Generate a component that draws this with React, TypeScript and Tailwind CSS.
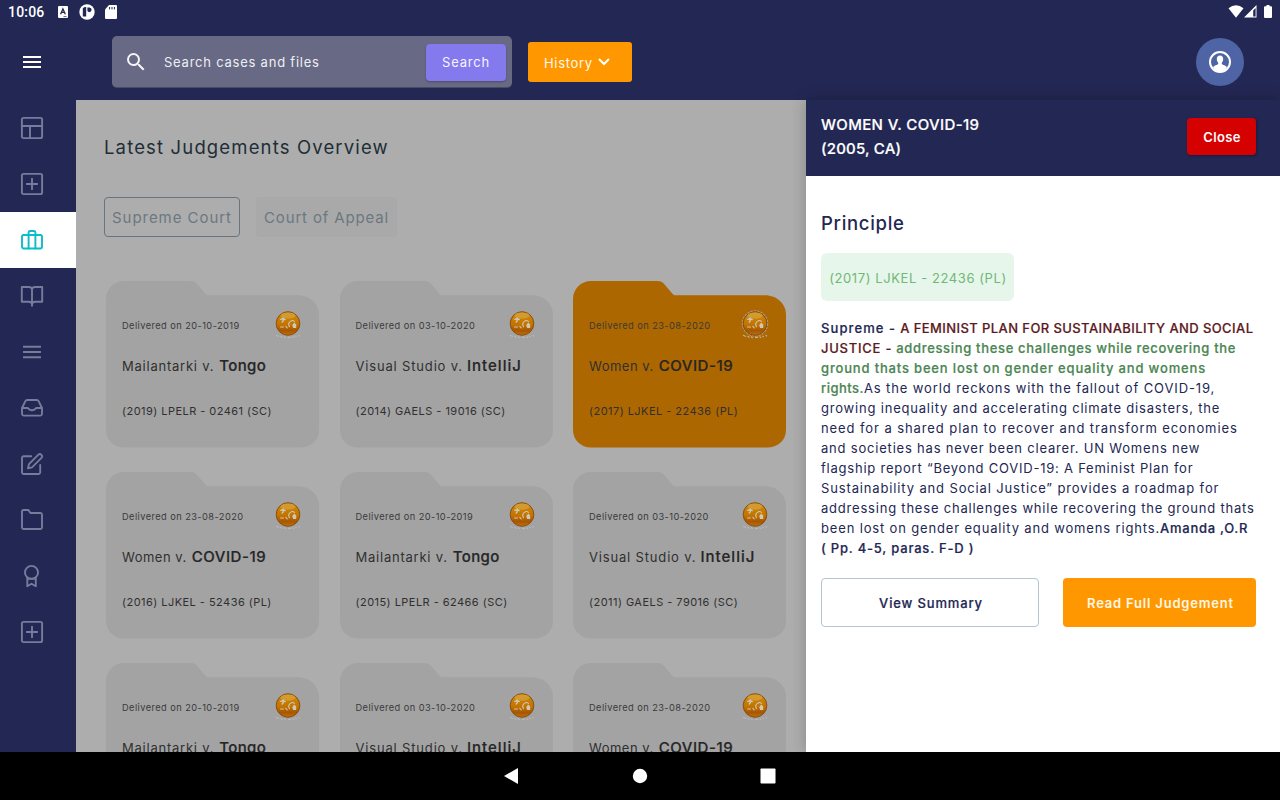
import type { ReactNode } from 'react';

function Glyph({ children, className = 'text-[#777b9c]' }: { children: ReactNode; className?: string }) {
  return (
    <svg
      viewBox="0 0 24 24"
      className={`size-6 ${className}`}
      fill="none"
      stroke="currentColor"
      strokeWidth="1.9"
      strokeLinecap="round"
      strokeLinejoin="round"
    >
      {children}
    </svg>
  );
}

const layoutGlyph = (
  <>
    <rect x="1.9" y="1.9" width="20.2" height="20.2" rx="1.6" />
    <path d="M2 10H22M10 10V22" />
  </>
);
const plusGlyph = (
  <>
    <rect x="1.9" y="1.9" width="20.2" height="20.2" rx="1.6" />
    <path d="M12 6.8V17.2M6.8 12H17.2" />
  </>
);
const briefcaseGlyph = (
  <>
    <rect x="2" y="7" width="20" height="13.5" rx="1.7" />
    <path d="M8.6 20.5V4.4A1.6 1.6 0 0 1 10.1 3H13.9A1.6 1.6 0 0 1 15.4 4.4V20.5" />
  </>
);
const bookGlyph = (
  <path d="M12 21.8V5.6C12 4 10.7 3 9 3H1.8V17.800H8.8C10.8 17.800 12 19 12 20.4C12 19 13.2 17.800 15.2 17.800H22.2V3H15C13.3 3 12 4 12 5.6" />
);
const menuGlyph = <path d="M4 6.8H20M4 12H20M4 17.2H20" strokeLinecap="square" />;
const inboxGlyph = (
  <path d="M2 12H7.6C8.6 12 8.6 14.2 12 14.2C15.4 14.2 15.4 12 16.4 12H22M2 12V18.2A1.7 1.7 0 0 0 3.6 19.6H20.4A1.7 1.7 0 0 0 22 18.2V12L18.6 5.1A2 2 0 0 0 16.8 4H7.2A2 2 0 0 0 5.4 5.1Z" />
);
const editGlyph = (
  <>
    <path d="M11.2 4.2H3.5A1.7 1.7 0 0 0 2 5.8V20.5A1.7 1.7 0 0 0 3.5 22H18.6A1.7 1.7 0 0 0 20.2 20.5V13" />
    <path d="M18.4 2.7A2.2 2.2 0 0 1 21.5 5.8L12 15.3L8 16.3L9 12.1Z" />
  </>
);
const folderGlyph = (
  <path d="M2 3.4A1.6 1.6 0 0 1 3.5 2H8.4L10.4 5H20.5A1.6 1.6 0 0 1 22 6.6V19.5A1.6 1.6 0 0 1 20.5 21H3.5A1.6 1.6 0 0 1 2 19.5Z" />
);
const awardGlyph = (
  <>
    <circle cx="11.5" cy="8.4" r="6.5" />
    <path d="M7.3 14V22.3L11.5 19.8L15.8 22.3V14M7.4 17.4V14.600H15.800V17.4" />
  </>
);

const nav = [
  { glyph: layoutGlyph, active: false },
  { glyph: plusGlyph, active: false },
  { glyph: briefcaseGlyph, active: true },
  { glyph: bookGlyph, active: false },
  { glyph: menuGlyph, active: false },
  { glyph: inboxGlyph, active: false },
  { glyph: editGlyph, active: false },
  { glyph: folderGlyph, active: false },
  { glyph: awardGlyph, active: false },
  { glyph: plusGlyph, active: false },
];

const plaintiffs = {
  mailantarki: <span className="tracking-[0.77px]">Mailantarki v.</span>,
  studio: <span className="tracking-[0.83px]">Visual Studio v.</span>,
  women: <span className="tracking-[0.5px]">Women v.</span>,
};
const defendants = {
  tongo: <span className="tracking-[0.36px]">Tongo</span>,
  intellij: <span className="-ml-px tracking-[1.02px]">IntelliJ</span>,
  covid: <span className="tracking-[0.55px]">COVID-19</span>,
};

const cases = [
  { date: '20-10-2019', p: plaintiffs.mailantarki, d: defendants.tongo, cite: '(2019) LPELR - 02461 (SC)' },
  { date: '03-10-2020', p: plaintiffs.studio, d: defendants.intellij, cite: '(2014) GAELS - 19016 (SC)' },
  { date: '23-08-2020', p: plaintiffs.women, d: defendants.covid, cite: '(2017) LJKEL - 22436 (PL)', selected: true },
  { date: '23-08-2020', p: plaintiffs.women, d: defendants.covid, cite: '(2016) LJKEL - 52436 (PL)' },
  { date: '20-10-2019', p: plaintiffs.mailantarki, d: defendants.tongo, cite: '(2015) LPELR - 62466 (SC)' },
  { date: '03-10-2020', p: plaintiffs.studio, d: defendants.intellij, cite: '(2011) GAELS - 79016 (SC)' },
  { date: '20-10-2019', p: plaintiffs.mailantarki, d: defendants.tongo, cite: '(2019) LPELR - 02461 (SC)' },
  { date: '03-10-2020', p: plaintiffs.studio, d: defendants.intellij, cite: '(2014) GAELS - 19016 (SC)' },
  { date: '23-08-2020', p: plaintiffs.women, d: defendants.covid, cite: '(2017) LJKEL - 22436 (PL)' },
];

function Emblem({ halo }: { halo?: boolean }) {
  return (
    <svg viewBox="0 0 30 32" className="-mb-0.5 h-8 w-[30px]">
      <defs>
        <linearGradient id="emblemFill" x1="0" y1="0" x2="0" y2="1">
          <stop offset="0" stopColor="#c98a14" />
          <stop offset="0.25" stopColor="#c98108" />
          <stop offset="0.55" stopColor="#c27400" />
          <stop offset="0.8" stopColor="#a95600" />
          <stop offset="1" stopColor="#b87310" />
        </linearGradient>
      </defs>
      {halo && (
        <circle cx="15" cy="14.5" r="12.6" fill="none" stroke="#a99f90" strokeWidth="1.2" strokeDasharray="2.4 1" />
      )}
      <circle cx="15" cy="14.5" r="11.8" fill="url(#emblemFill)" stroke="#8c4d0c" strokeWidth="1" />
      <ellipse cx="15" cy="6.6" rx="7.5" ry="3.2" fill="#e0b556" opacity="0.45" />
      <g fill="none" stroke="#cfc8b6" strokeLinecap="round">
        <path d="M7.800 10.400L10 9.6L12.2 10.6M10.200 9V11.8L9.200 13" strokeWidth="1.4" />
        <path d="M7.6 18H10.4M12.800 17.4L14.2 18.8M16.6 13L15.6 15L16.4 17.8M17.600 12.400C19 11 20.800 11.4 21.4 12.600" strokeWidth="1.1" />
      </g>
      <path d="M19.2 16.200L21.2 13.6L23.2 15.6V19H20.2Z" fill="#cfc8b6" />
      <path
        d="M3 26.300L6 27.6M7.4 27L9.5 28.6M11 27.4L12.6 29M15 28.4H18M19.5 27.5L21 28.8M22.4 26.8L23.6 28.2M25.6 26.2L27 27.2"
        stroke={halo ? '#c4b294' : '#b9b9b9'}
        strokeWidth="1.1"
      />
    </svg>
  );
}

function CaseCard({ item }: { item: (typeof cases)[number] }) {
  return (
    <article className="relative h-[167px] w-[213px]">
      <svg
        viewBox="0 0 213 167"
        className={`absolute inset-0 h-full w-full ${item.selected ? 'text-[#ad6700]' : 'text-[#a3a3a3]'}`}
      >
        <path
          fill="currentColor"
          d="M18 0H84C88 0 90 1.5 92 4L99 12.2C100.4 13.8 101 14.2 103 14.2H192C204 14.2 213 23 213 33V149C213 159.500 204.500 166.500 194 166.500H18C8 166.500 0 159 0 149V18C0 8 8 0 18 0Z"
        />
      </svg>
      <div className="relative flex h-full flex-col pl-4 text-[#303030]">
        <div className="flex h-[58px] items-end justify-between pr-4">
          <p className="whitespace-nowrap pb-[7px] text-[9.25px] leading-[13px] tracking-[0.43px] text-[#3a3a3a]">
            Delivered on {item.date}
          </p>
          <Emblem halo={item.selected} />
        </div>
        <h3 className="mt-[15px] flex h-6 items-baseline gap-[5px] whitespace-nowrap text-[13px] leading-6">
          {item.p}
          <span className="text-[15px] font-medium text-[#262626] [-webkit-text-stroke:0.2px]">{item.d}</span>
        </h3>
        <p className="mt-6 whitespace-nowrap text-[11px] leading-[18px] tracking-[0.46px]">{item.cite}</p>
      </div>
    </article>
  );
}

function StatusBar() {
  return (
    <div className="flex h-6 items-center justify-between pl-2 pr-2 text-white">
      <div className="flex items-center">
        <span className="w-[50px] font-['Roboto'] text-[14px] font-medium leading-6 tracking-[0.2px]">10:06</span>
        <svg viewBox="0 0 10 12" className="h-3 w-[10px]">
          <rect width="10" height="12" rx="1" fill="#fff" />
          <path d="M2.6 8.200L4.9 2.800L7.300 8.200M3.400 6.400H6.500" fill="none" stroke="#232753" strokeWidth="1.3" />
          <path d="M5.500 10.600H8.600" stroke="#232753" strokeWidth="0.7" />
        </svg>
        <svg viewBox="0 0 16 16" className="ml-[11px] size-4">
          <circle cx="8" cy="8" r="7.700" fill="#fff" />
          <path d="M3.800 4.200Q5.400 2.600 7.200 3V12.400H3.800Z" fill="#232753" />
          <path d="M8.400 3.400H10.400Q12.600 3.600 12.600 5.800Q12.400 8.200 10.200 8.200Q8.400 8 8.400 6.600Z" fill="#232753" />
        </svg>
        <svg viewBox="0 0 12 14" className="ml-[10px] h-[14px] w-3">
          <path d="M4 0H11Q12 0 12 1V13Q12 14 11 14H1Q0 14 0 13V4.400Z" fill="#fff" />
          <path d="M4.600 2V4.400M7 2V4.400M9.400 2V4.400" stroke="#232753" strokeWidth="1" />
        </svg>
      </div>
      <div className="flex items-center pb-0.5">
        <svg viewBox="0 0 16 13" className="h-[13px] w-4">
          <path d="M0.500 3.200Q8 -2.800 15.500 3.200L8 12.800Z" fill="#fff" />
        </svg>
        <svg viewBox="0 0 13 13" className="h-[13px] w-[13px]">
          <path d="M0 12.500L12.500 0V12.500Z" fill="#fff" />
          <path d="M9.200 5.400L11.600 3V11.600H9.200Z" fill="#232753" />
        </svg>
        <svg viewBox="0 0 8 13" className="ml-[7px] h-[13px] w-2">
          <path d="M2.500 0H5.500V1.200H7Q8 1.200 8 2.200V12Q8 13 7 13H1Q0 13 0 12V2.200Q0 1.200 1 1.200H2.500Z" fill="#fff" />
        </svg>
      </div>
    </div>
  );
}

function Header() {
  return (
    <header className="flex h-[76px] items-center pr-9">
      <div className="flex w-[76px] shrink-0 pl-5">
        <svg viewBox="0 0 24 24" className="size-6">
          <path d="M3 7H21M3 12H21M3 17H21" stroke="#fff" strokeWidth="2" />
        </svg>
      </div>
      <div className="ml-9 flex h-[52px] w-[400px] items-center rounded-[5px] border-b border-[#4a4b5c] bg-[#676985] pl-3 pr-[6px]">
        <svg viewBox="0 0 24 24" className="size-6">
          <path
            fill="#f4f4f6"
            d="M15.500 14h-.79l-.28-.27A6.471 6.471 0 0 0 16 9.500 6.500 6.500 0 1 0 9.500 16c1.610 0 3.090-.59 4.230-1.570l.27.28v.79l5 4.990L20.490 19l-4.990-5zm-6 0C7.010 14 5 11.990 5 9.500S7.010 5 9.500 5 14 7.010 14 9.500 11.990 14 9.500 14z"
          />
        </svg>
        <span className="ml-4 flex-1 whitespace-nowrap pt-[3px] text-[13px] tracking-[0.77px] text-[#eeeef2]">
          Search cases and files
        </span>
        <button className="mt-px h-[37px] w-20 rounded-[4px] bg-[#8479ed] pt-0.5 text-[13px] tracking-[0.77px] text-[#f6f4ff] shadow-[0_1px_2px_rgba(0,0,0,0.25)]">
          Search
        </button>
      </div>
      <button className="ml-4 flex h-10 w-[104px] items-center rounded-[3px] bg-[#ff9800] pl-4 text-[13px] tracking-[0.67px] text-[#fff8ec]">
        <span className="pt-[3px]">History</span>
        <svg viewBox="0 0 12 8" className="ml-[5px] h-2 w-3">
          <path d="M1 1L6 6L11 1" fill="none" stroke="#fff" strokeWidth="2" />
        </svg>
      </button>
      <div className="ml-auto flex size-12 items-center justify-center rounded-full bg-[#4f64a5]">
        <svg viewBox="0 0 22 22" className="size-[22px]">
          <circle cx="11" cy="11" r="10" fill="none" stroke="#fff" strokeWidth="2" />
          <path
            fill="#fff"
            d="M11 4.500C13 4.500 14.200 6 14.200 8C14.200 9.800 13.500 11 12.800 11.700V13C14 14 16.500 14.300 18 16C16.500 19 14 20.500 11 20.500S5.500 19 4 16C5.500 14.300 8 14 9.200 13V11.700C8.500 11 7.800 9.800 7.800 8C7.800 6 9 4.500 11 4.500Z"
          />
        </svg>
      </div>
    </header>
  );
}

function Drawer() {
  return (
    <aside className="relative flex w-[474px] shrink-0 flex-col bg-white text-[#232753] shadow-[0_0_14px_rgba(0,0,0,0.22)]">
      <div className="flex h-[76px] shrink-0 items-center justify-between bg-[#232753] pl-[15px] pr-6 text-white">
        <h2 className="flex flex-col pb-0.5 text-[15px] font-medium leading-6 [-webkit-text-stroke:0.2px]">
          <span className="tracking-[0.36px]">WOMEN V. COVID-19</span>
          <span className="tracking-[0.2px]">(2005, CA)</span>
        </h2>
        <button className="mb-[3px] h-[37px] w-[69px] rounded-[4px] bg-[#d50000] pl-px pt-[3px] text-[13px] font-semibold tracking-[0.32px] shadow-[1px_1px_3px_rgba(0,0,0,0.3)]">
          Close
        </button>
      </div>
      <div className="flex flex-col items-start pl-[15px] pr-6">
        <h2 className="mt-[33px] text-[18.5px] font-medium leading-7 tracking-[0.7px]">Principle</h2>
        <p className="mt-4 flex h-12 w-[193px] items-center justify-center whitespace-nowrap rounded-[6px] bg-[#e6f6ea] pl-px pt-[3px] text-[13px] tracking-[0.59px] text-[#72b679]">
          (2017) LJKEL - 22436 (PL)
        </p>
        <div className="mt-[17px] flex flex-col whitespace-nowrap text-[13px] leading-5">
          <p className="flex gap-[4px] font-medium [-webkit-text-stroke:0.2px]">
            <span className="tracking-[1.1px]">Supreme -</span>
            <span className="tracking-[0.41px] text-[#5d1a1e]">A FEMINIST PLAN FOR SUSTAINABILITY AND SOCIAL</span>
          </p>
          <p className="flex gap-[4px] font-medium [-webkit-text-stroke:0.2px]">
            <span className="tracking-[0.76px] text-[#5d1a1e]">JUSTICE -</span>
            <span className="tracking-[0.67px] text-[#4b8653]">addressing these challenges while recovering the</span>
          </p>
          <p className="font-medium tracking-[0.83px] text-[#4b8653] [-webkit-text-stroke:0.2px]">
            ground thats been lost on gender equality and womens
          </p>
          <p className="flex">
            <span className="font-medium tracking-[0.48px] text-[#4b8653] [-webkit-text-stroke:0.2px]">rights.</span>
            <span className="tracking-[0.88px]">As the world reckons with the fallout of COVID-19,</span>
          </p>
          <p className="tracking-[0.8px]">growing inequality and accelerating climate disasters, the</p>
          <p className="tracking-[0.91px]">need for a shared plan to recover and transform economies</p>
          <p className="tracking-[0.8px]">and societies has never been clearer. UN Womens new</p>
          <p className="tracking-[0.77px]">flagship report “Beyond COVID-19: A Feminist Plan for</p>
          <p className="tracking-[0.86px]">Sustainability and Social Justice” provides a roadmap for</p>
          <p className="tracking-[0.79px]">addressing these challenges while recovering the ground thats</p>
          <p className="flex">
            <span className="tracking-[0.84px]">been lost on gender equality and womens rights.</span>
            <span className="font-medium tracking-[0.75px] [-webkit-text-stroke:0.2px]">Amanda ,O.R</span>
          </p>
          <p className="font-medium tracking-[0.8px] [-webkit-text-stroke:0.2px]">( Pp. 4-5, paras. F-D )</p>
        </div>
        <div className="mt-5 flex gap-6">
          <button className="h-[49px] w-[218px] rounded-[4px] border border-[#b3c5cf] pl-0.5 pt-0.5 text-[13px] font-medium tracking-[0.85px] [-webkit-text-stroke:0.2px]">
            View Summary
          </button>
          <button className="h-[49px] w-[193px] rounded-[4px] bg-[#ff9800] pl-0.5 pt-0.5 text-[13px] font-semibold tracking-[0.8px] text-[#fff6e6]">
            Read Full Judgement
          </button>
        </div>
      </div>
    </aside>
  );
}

export default function App() {
  return (
    <div className="flex h-[800px] w-[1280px] flex-col overflow-hidden bg-[#232753] font-['Inter',sans-serif]">
      <StatusBar />
      <Header />
      <div className="flex h-[652px] overflow-visible">
        <nav className="flex w-[76px] shrink-0 flex-col">
          {nav.map((n, i) => (
            <a key={i} className={`flex h-14 shrink-0 items-center pl-5 ${n.active ? 'bg-white' : ''}`}>
              <Glyph className={n.active ? 'text-[#0bbdc9]' : 'text-[#777b9c]'}>{n.glyph}</Glyph>
            </a>
          ))}
        </nav>
        <main className="flex w-[730px] shrink-0 flex-col overflow-hidden bg-[#adadad]">
          <h1 className="ml-7 mt-[31px] text-[18.5px] leading-8 tracking-[1.15px] text-[#1e2d36]">
            Latest Judgements Overview
          </h1>
          <div className="ml-7 mt-[34px] flex gap-4 text-[15px] text-[#6b7880]">
            <button className="h-10 w-[136px] whitespace-nowrap rounded-[4px] border border-[#66757f] pt-0.5 tracking-[0.95px]">
              Supreme Court
            </button>
            <button className="h-10 w-[141px] whitespace-nowrap rounded-[4px] bg-[#a9a9a9] pt-0.5 tracking-[0.84px]">
              Court of Appeal
            </button>
          </div>
          <div className="ml-[30px] mt-11 grid grid-cols-[213px_213px_213px] gap-x-[20.5px] gap-y-6">
            {cases.map((c, i) => (
              <CaseCard key={i} item={c} />
            ))}
          </div>
        </main>
        <Drawer />
      </div>
      <footer className="relative flex h-12 items-center bg-black">
        <svg viewBox="0 0 280 24" className="ml-[500px] h-6 w-[280px]">
          <path d="M4 12L18 4V20Z" fill="#fff" />
          <circle cx="140" cy="12" r="7.200" fill="#fff" />
          <rect x="260.500" y="4.500" width="15" height="15" rx="0.800" fill="#fff" />
        </svg>
      </footer>
    </div>
  );
}
